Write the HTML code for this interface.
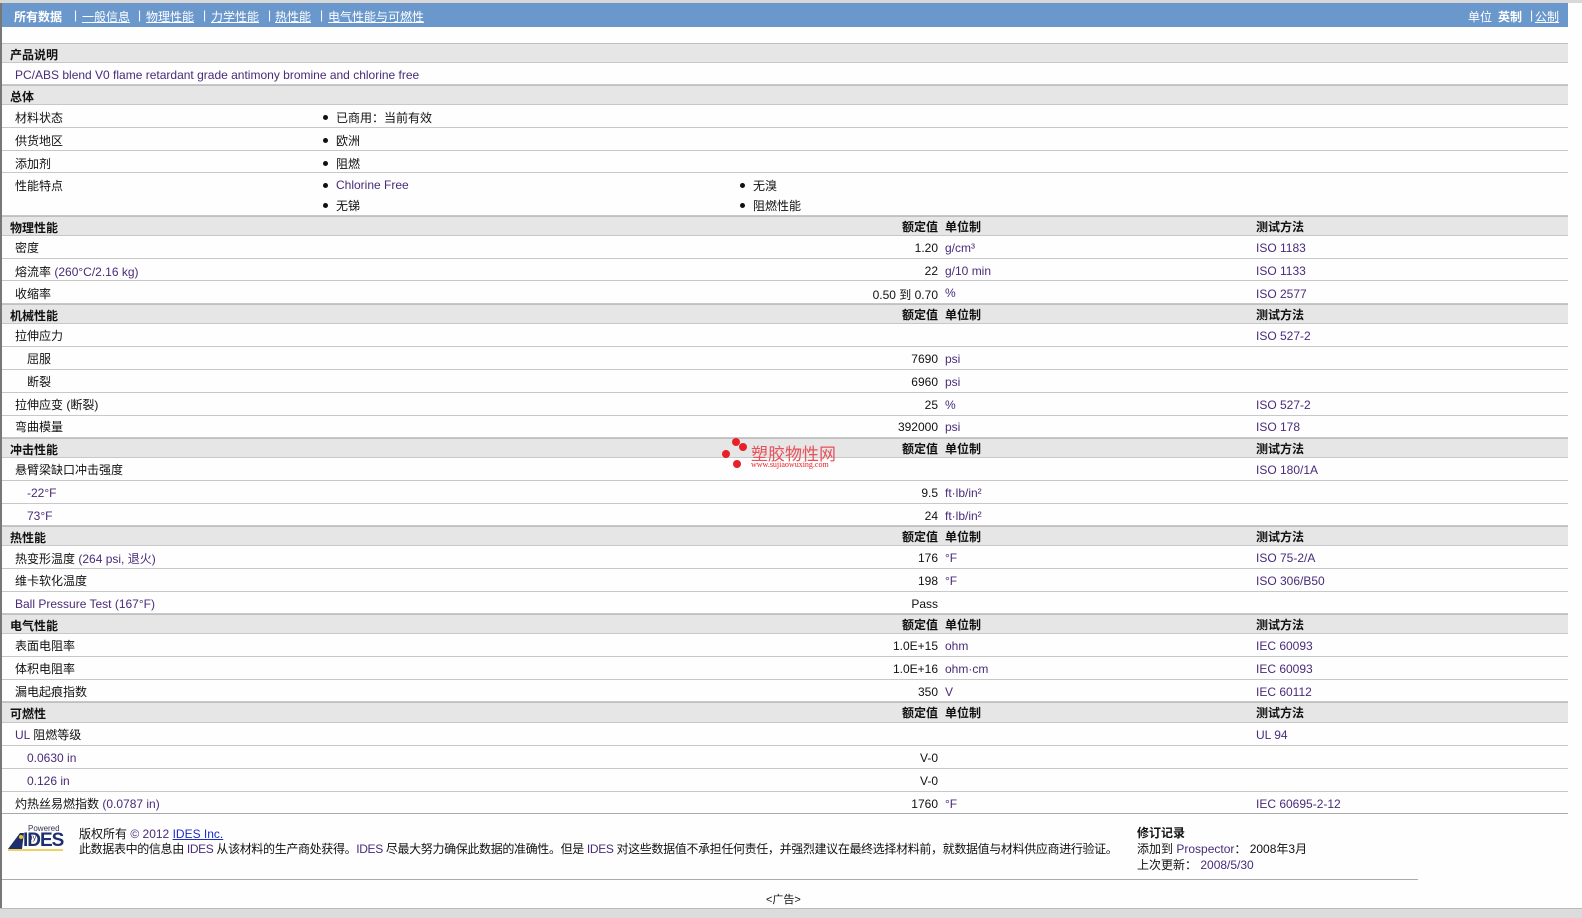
<!DOCTYPE html>
<html><head><meta charset="utf-8"><style>
*{margin:0;padding:0;box-sizing:border-box}
body{width:1582px;height:918px;background:#fdfefd;position:relative;overflow:hidden;font-family:"Liberation Sans","Noto Sans CJK SC",sans-serif;font-size:12px;color:#111}
.lb{position:absolute;left:0;top:0;width:2px;height:908px;background:#777}
.nav{position:absolute;left:2px;top:3px;width:1566px;height:24px;background:#6a98cc;color:#fff;font-size:12px}
.nav span{position:absolute;top:5px}
.nav u{color:#fff}
.r,.h{position:absolute;left:2px;width:1566px;border-bottom:1px solid #c8c8c8}
.h{background:#e6e6e6;font-weight:bold;border-top:1px solid #c0c0c0}
.r span,.h span{position:absolute;white-space:nowrap}
.l{left:13px}.l2{left:25px}
.v{right:630px;text-align:right}
.u{left:943px}
.t{left:1254px}
.p{color:#4a2a7a}
.b{left:321px}.b2{left:738px}
.bt{left:334px}.bt2{left:751px}
.dot{display:inline-block;width:5px;height:5px;border-radius:50%;background:#111}
</style></head><body>
<div class="lb"></div>
<div style="position:absolute;left:0;top:0;width:1582px;height:3px;background:#d8d8d8"></div>
<div class="nav">
<span style="left:12px;font-weight:bold">所有数据</span>
<span style="left:72px">|</span><span style="left:80px"><u>一般信息</u></span>
<span style="left:136px">|</span><span style="left:144px"><u>物理性能</u></span>
<span style="left:201px">|</span><span style="left:209px"><u>力学性能</u></span>
<span style="left:266px">|</span><span style="left:273px"><u>热性能</u></span>
<span style="left:318px">|</span><span style="left:326px"><u>电气性能与可燃性</u></span>
<span style="left:1466px">单位</span><span style="left:1496px;font-weight:bold">英制</span><span style="left:1528px">|</span><span style="left:1533px"><u>公制</u></span>
</div>

<div class="h" style="top:43px;height:20px"><span class="l" style="left:8px;top:2px">产品说明</span></div>
<div class="r" style="top:63px;height:22px"><span class="l p" style="top:5px">PC/ABS blend V0 flame retardant grade antimony bromine and chlorine free</span></div>
<div class="h" style="top:85px;height:20px"><span style="left:8px;top:2px">总体</span></div>
<div class="r" style="top:105px;height:23px"><span class="l" style="top:4px">材料状态</span><span class="b" style="top:4px"><i class="dot"></i></span><span class="bt" style="top:4px">已商用：当前有效</span></div>
<div class="r" style="top:128px;height:23px"><span class="l" style="top:4px">供货地区</span><span class="b" style="top:4px"><i class="dot"></i></span><span class="bt" style="top:4px">欧洲</span></div>
<div class="r" style="top:151px;height:22px"><span class="l" style="top:4px">添加剂</span><span class="b" style="top:4px"><i class="dot"></i></span><span class="bt" style="top:4px">阻燃</span></div>
<div class="r" style="top:173px;height:43px"><span class="l" style="top:4px">性能特点</span>
<span class="b" style="top:4px"><i class="dot"></i></span><span class="bt p" style="top:5px">Chlorine Free</span>
<span class="b2" style="top:4px"><i class="dot"></i></span><span class="bt2" style="top:4px">无溴</span>
<span class="b" style="top:24px"><i class="dot"></i></span><span class="bt" style="top:24px">无锑</span>
<span class="b2" style="top:24px"><i class="dot"></i></span><span class="bt2" style="top:24px">阻燃性能</span></div>

<div class="h" style="top:216px;height:20px"><span style="left:8px;top:2px">物理性能</span><span class="v" style="top:1px">额定值</span><span class="u" style="top:1px">单位制</span><span class="t" style="top:1px">测试方法</span></div>
<div class="r" style="top:236px;height:23px"><span class="l" style="top:3px">密度</span><span class="v" style="top:5px">1.20</span><span class="u p" style="top:5px">g/cm³</span><span class="t p" style="top:5px">ISO 1183</span></div>
<div class="r" style="top:259px;height:22px"><span class="l" style="top:4px">熔流率 <span class="p" style="position:static">(260°C/2.16 kg)</span></span><span class="v" style="top:5px">22</span><span class="u p" style="top:5px">g/10 min</span><span class="t p" style="top:5px">ISO 1133</span></div>
<div class="r" style="top:281px;height:23px"><span class="l" style="top:4px">收缩率</span><span class="v" style="top:5px">0.50 到 0.70</span><span class="u p" style="top:5px">%</span><span class="t p" style="top:6px">ISO 2577</span></div>

<div class="h" style="top:304px;height:20px"><span style="left:8px;top:2px">机械性能</span><span class="v" style="top:1px">额定值</span><span class="u" style="top:1px">单位制</span><span class="t" style="top:1px">测试方法</span></div>
<div class="r" style="top:324px;height:23px"><span class="l" style="top:3px">拉伸应力</span><span class="t p" style="top:5px">ISO 527-2</span></div>
<div class="r" style="top:347px;height:23px"><span class="l2" style="top:3px">屈服</span><span class="v" style="top:5px">7690</span><span class="u p" style="top:5px">psi</span></div>
<div class="r" style="top:370px;height:23px"><span class="l2" style="top:3px">断裂</span><span class="v" style="top:5px">6960</span><span class="u p" style="top:5px">psi</span></div>
<div class="r" style="top:393px;height:23px"><span class="l" style="top:3px">拉伸应变 (断裂)</span><span class="v" style="top:5px">25</span><span class="u p" style="top:5px">%</span><span class="t p" style="top:5px">ISO 527-2</span></div>
<div class="r" style="top:416px;height:22px"><span class="l" style="top:2px">弯曲模量</span><span class="v" style="top:4px">392000</span><span class="u p" style="top:4px">psi</span><span class="t p" style="top:4px">ISO 178</span></div>

<div class="h" style="top:438px;height:20px"><span style="left:8px;top:2px">冲击性能</span><span class="v" style="top:1px">额定值</span><span class="u" style="top:1px">单位制</span><span class="t" style="top:1px">测试方法</span></div>
<div class="r" style="top:458px;height:23px"><span class="l" style="top:3px">悬臂梁缺口冲击强度</span><span class="t p" style="top:5px">ISO 180/1A</span></div>
<div class="r" style="top:481px;height:23px"><span class="l2 p" style="top:5px">-22°F</span><span class="v" style="top:5px">9.5</span><span class="u p" style="top:5px">ft·lb/in²</span></div>
<div class="r" style="top:504px;height:22px"><span class="l2 p" style="top:5px">73°F</span><span class="v" style="top:5px">24</span><span class="u p" style="top:5px">ft·lb/in²</span></div>

<div class="h" style="top:526px;height:20px"><span style="left:8px;top:2px">热性能</span><span class="v" style="top:1px">额定值</span><span class="u" style="top:1px">单位制</span><span class="t" style="top:1px">测试方法</span></div>
<div class="r" style="top:546px;height:23px"><span class="l" style="top:4px">热变形温度 <span class="p" style="position:static">(264 psi, 退火)</span></span><span class="v" style="top:5px">176</span><span class="u p" style="top:5px">°F</span><span class="t p" style="top:5px">ISO 75-2/A</span></div>
<div class="r" style="top:569px;height:23px"><span class="l" style="top:3px">维卡软化温度</span><span class="v" style="top:5px">198</span><span class="u p" style="top:5px">°F</span><span class="t p" style="top:5px">ISO 306/B50</span></div>
<div class="r" style="top:592px;height:22px"><span class="l p" style="top:5px">Ball Pressure Test (167°F)</span><span class="v" style="top:5px">Pass</span></div>

<div class="h" style="top:614px;height:20px"><span style="left:8px;top:2px">电气性能</span><span class="v" style="top:1px">额定值</span><span class="u" style="top:1px">单位制</span><span class="t" style="top:1px">测试方法</span></div>
<div class="r" style="top:634px;height:23px"><span class="l" style="top:3px">表面电阻率</span><span class="v" style="top:5px">1.0E+15</span><span class="u p" style="top:5px">ohm</span><span class="t p" style="top:5px">IEC 60093</span></div>
<div class="r" style="top:657px;height:23px"><span class="l" style="top:3px">体积电阻率</span><span class="v" style="top:5px">1.0E+16</span><span class="u p" style="top:5px">ohm·cm</span><span class="t p" style="top:5px">IEC 60093</span></div>
<div class="r" style="top:680px;height:22px"><span class="l" style="top:3px">漏电起痕指数</span><span class="v" style="top:5px">350</span><span class="u p" style="top:5px">V</span><span class="t p" style="top:5px">IEC 60112</span></div>

<div class="h" style="top:702px;height:21px"><span style="left:8px;top:2px">可燃性</span><span class="v" style="top:1px">额定值</span><span class="u" style="top:1px">单位制</span><span class="t" style="top:1px">测试方法</span></div>
<div class="r" style="top:723px;height:23px"><span class="l" style="top:3px"><span class="p" style="position:static">UL</span> 阻燃等级</span><span class="t p" style="top:5px">UL 94</span></div>
<div class="r" style="top:746px;height:23px"><span class="l2 p" style="top:5px">0.0630 in</span><span class="v" style="top:5px">V-0</span></div>
<div class="r" style="top:769px;height:23px"><span class="l2 p" style="top:5px">0.126 in</span><span class="v" style="top:5px">V-0</span></div>
<div class="r" style="top:792px;height:22px;border-bottom:1px solid #aaa"><span class="l" style="top:3px">灼热丝易燃指数 <span class="p" style="position:static">(0.0787 in)</span></span><span class="v" style="top:5px">1760</span><span class="u p" style="top:5px">°F</span><span class="t p" style="top:5px">IEC 60695-2-12</span></div>

<!-- footer -->
<div style="position:absolute;left:8px;top:824px;width:62px;height:28px">
<div style="position:absolute;left:20px;top:0;font-size:8px;color:#335;">Powered by</div>
<svg style="position:absolute;left:0;top:8px" width="20" height="18"><polygon points="0,17 12,1 16,1 14,17" fill="#1e2f6e"/><circle cx="13" cy="5" r="2" fill="#f0c020"/></svg>
<div style="position:absolute;left:15px;top:6px;font-size:19px;font-weight:bold;color:#1e2f6e;letter-spacing:-1px">IDES</div>
<div style="position:absolute;left:0;top:25px;width:55px;height:2px;background:#f0d060"></div>
</div>
<div style="position:absolute;left:79px;top:825px">版权所有 <span class="p">© 2012</span> <u style="color:#1a2acc">IDES Inc.</u></div>
<div style="position:absolute;left:79px;top:840px;white-space:nowrap;letter-spacing:-0.35px">此数据表中的信息由 <span class="p">IDES</span> 从该材料的生产商处获得。<span class="p">IDES</span> 尽最大努力确保此数据的准确性。但是 <span class="p">IDES</span> 对这些数据值不承担任何责任，并强烈建议在最终选择材料前，就数据值与材料供应商进行验证。</div>
<div style="position:absolute;left:1137px;top:824px;font-weight:bold">修订记录</div>
<div style="position:absolute;left:1137px;top:840px">添加到 <span class="p">Prospector</span>：&nbsp;2008年3月</div>
<div style="position:absolute;left:1137px;top:856px">上次更新：&nbsp;<span class="p">2008/5/30</span></div>
<div style="position:absolute;left:2px;top:879px;width:1416px;height:1px;background:#aaa"></div>
<div style="position:absolute;left:766px;top:891px;font-size:11px">&lt;广告&gt;</div>
<div style="position:absolute;left:0;top:908px;width:1582px;height:10px;background:#dcdcdc;border-top:1px solid #bbb"></div>

<!-- watermark -->
<div style="position:absolute;left:722px;top:438px;width:130px;height:34px">
<i style="position:absolute;left:10px;top:0;width:8px;height:8px;border-radius:50%;background:#e8202a"></i>
<i style="position:absolute;left:17px;top:5px;width:8px;height:8px;border-radius:50%;background:#e8202a"></i>
<i style="position:absolute;left:0;top:12px;width:8px;height:8px;border-radius:50%;background:#e8202a"></i>
<i style="position:absolute;left:11px;top:22px;width:8px;height:8px;border-radius:50%;background:#e8202a"></i>
<span style="position:absolute;left:29px;top:2px;font-size:17px;color:#e8505a;white-space:nowrap">塑胶物性网</span>
<span style="position:absolute;left:29px;top:22px;font-size:8px;color:#e8202a;font-family:'Liberation Serif',serif;white-space:nowrap">www.sujiaowuxing.com</span>
</div>
</body></html>
